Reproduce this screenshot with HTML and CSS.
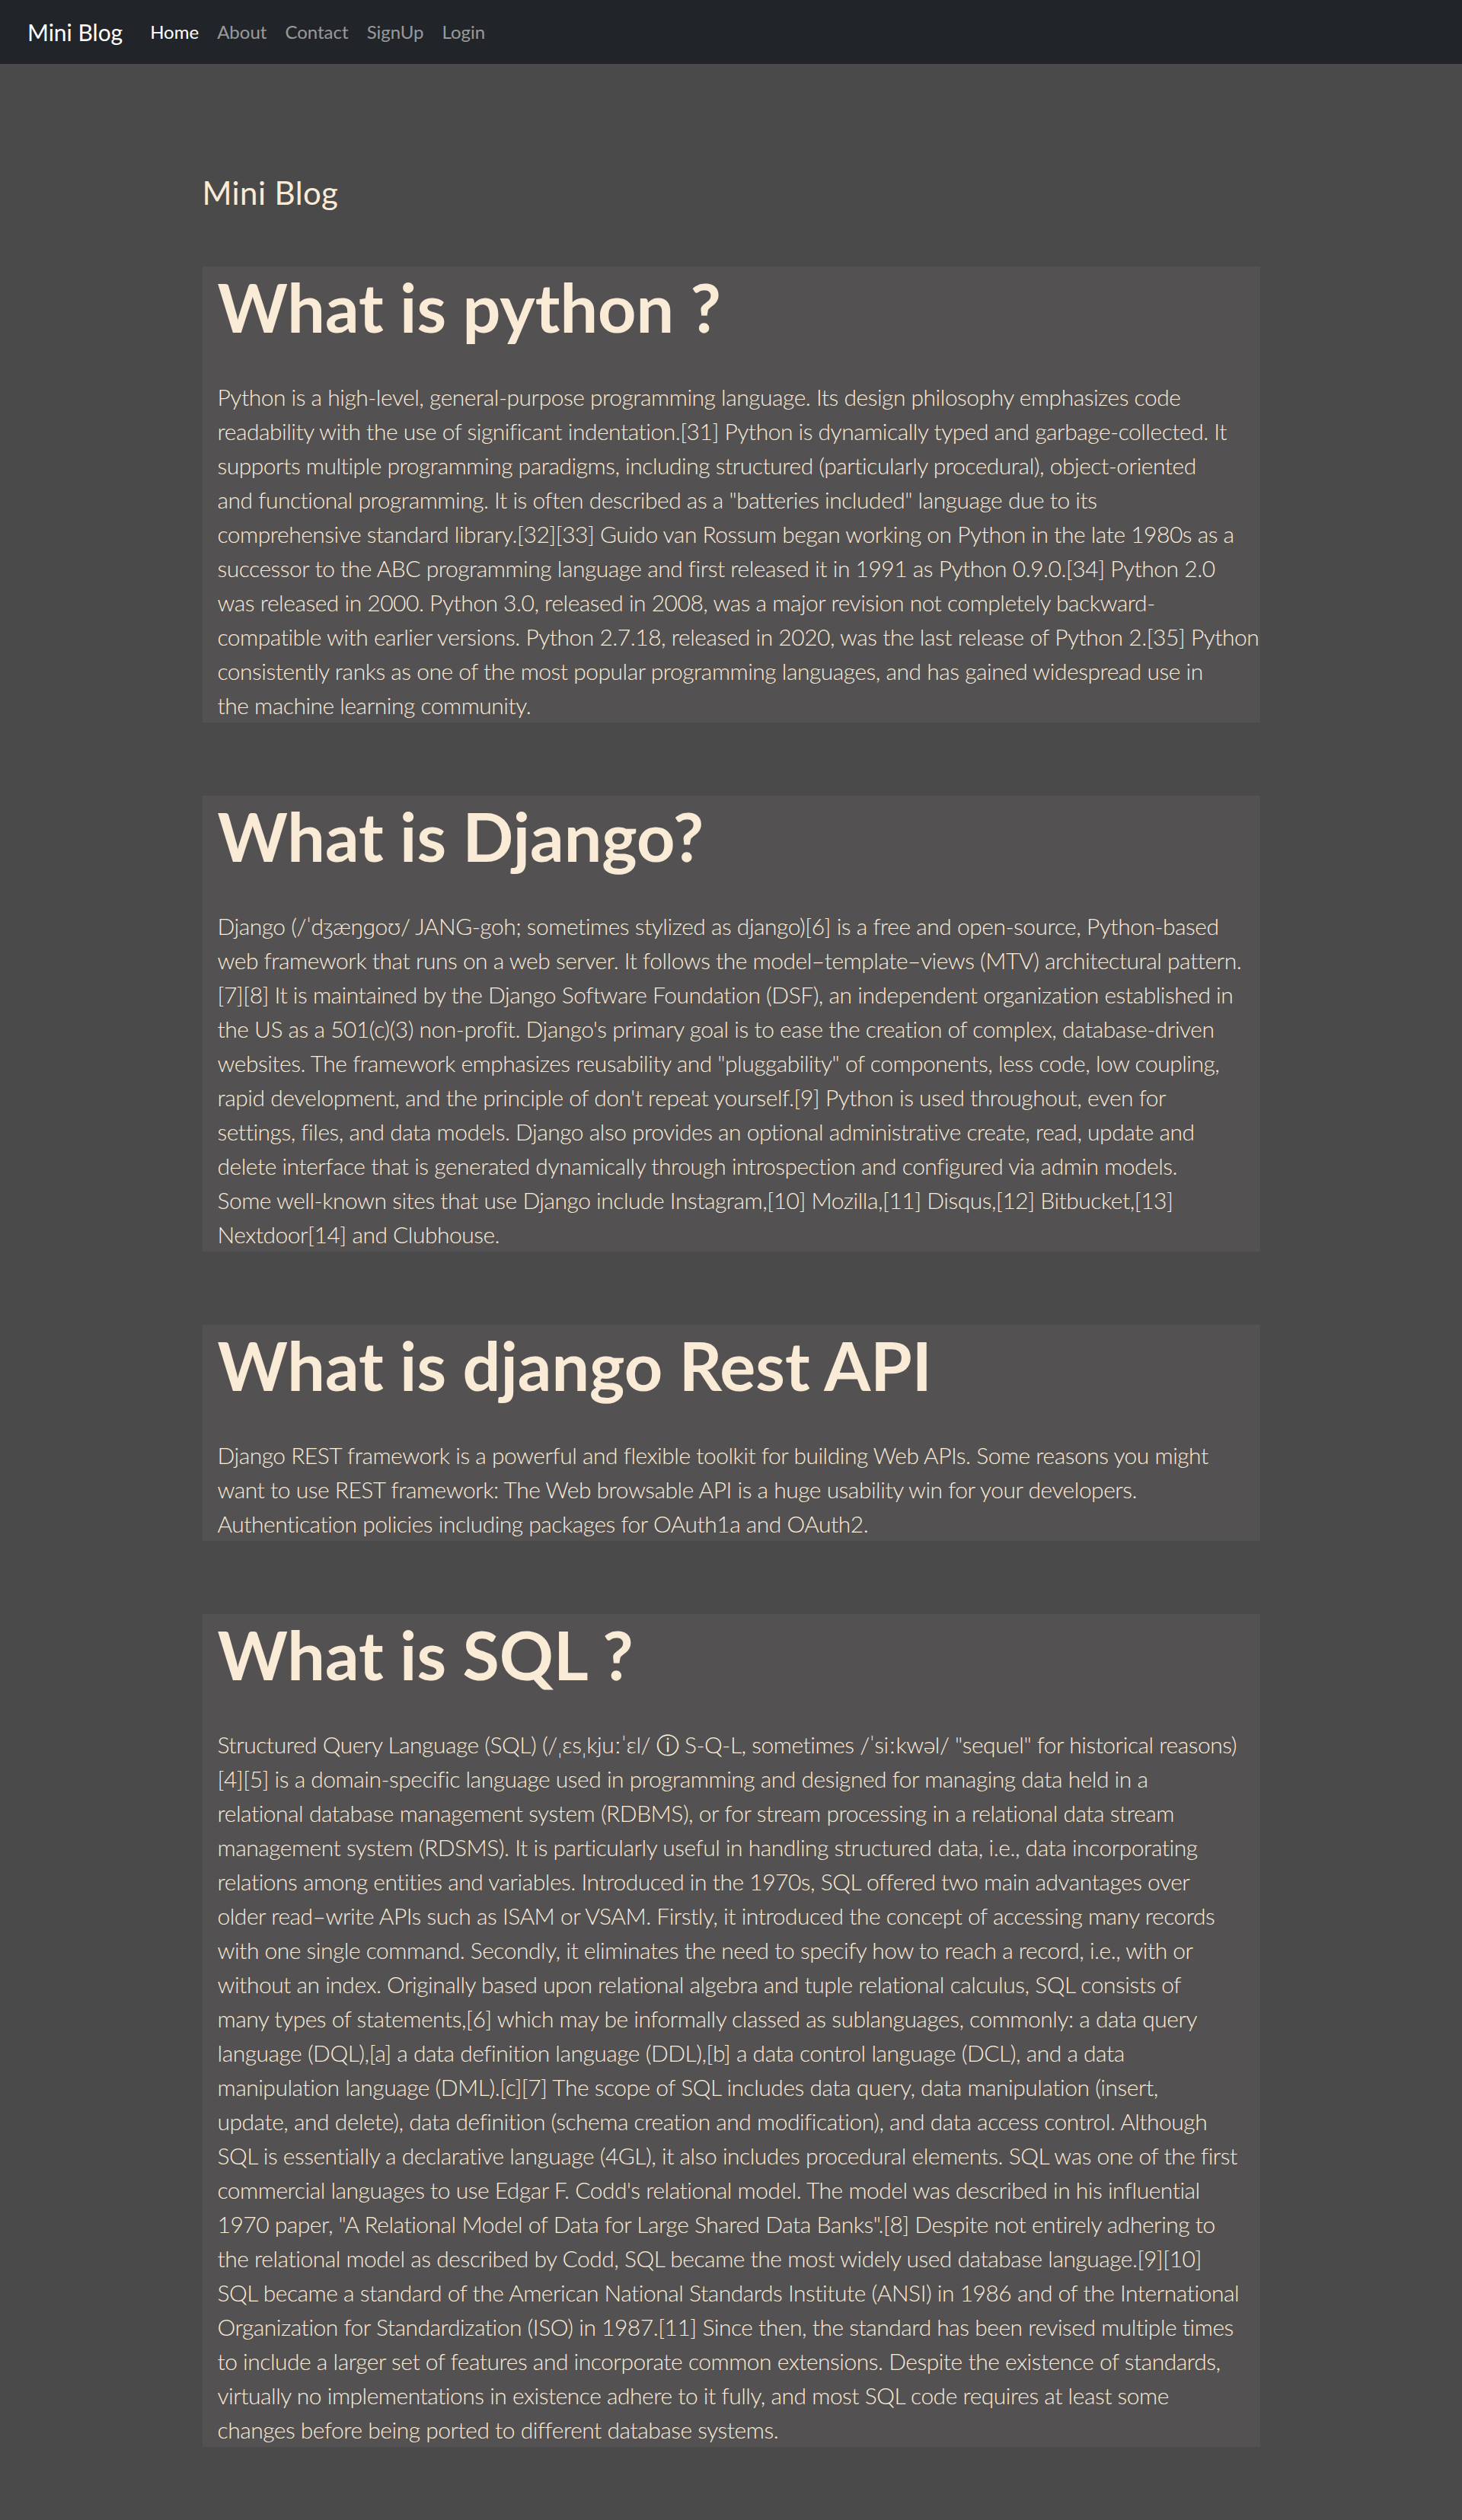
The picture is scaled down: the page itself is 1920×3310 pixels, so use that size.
FILE: index.html
```html
<!DOCTYPE html>
<html lang="en">
<head>
<meta charset="utf-8">
<title>Mini Blog</title>
<link rel="stylesheet" href="styles.css">
</head>
<body>
<nav class="navbar">
  <a class="brand" href="#">Mini Blog</a>
  <ul class="nav-links">
    <li><a class="nav-link active" href="#">Home</a></li>
    <li><a class="nav-link" href="#">About</a></li>
    <li><a class="nav-link" href="#">Contact</a></li>
    <li><a class="nav-link" href="#">SignUp</a></li>
    <li><a class="nav-link" href="#">Login</a></li>
  </ul>
</nav>
<main class="container">
  <h3 class="page-title">Mini Blog</h3>

  <article class="post">
    <h1 class="post-title">What is python ?</h1>
    <p class="post-body">Python is a high-level, general-purpose programming language. Its design philosophy emphasizes code<br>
readability with the use of significant indentation.[31] Python is dynamically typed and garbage-collected. It<br>
supports multiple programming paradigms, including structured (particularly procedural), object-oriented<br>
and functional programming. It is often described as a "batteries included" language due to its<br>
comprehensive standard library.[32][33] Guido van Rossum began working on Python in the late 1980s as a<br>
successor to the ABC programming language and first released it in 1991 as Python 0.9.0.[34] Python 2.0<br>
was released in 2000. Python 3.0, released in 2008, was a major revision not completely backward-<br>
compatible with earlier versions. Python 2.7.18, released in 2020, was the last release of Python 2.[35] Python<br>
consistently ranks as one of the most popular programming languages, and has gained widespread use in<br>
the machine learning community.</p>
  </article>

  <article class="post">
    <h1 class="post-title">What is Django?</h1>
    <p class="post-body">Django (/ˈdʒæŋɡoʊ/ JANG-goh; sometimes stylized as django)[6] is a free and open-source, Python-based<br>
web framework that runs on a web server. It follows the model–template–views (MTV) architectural pattern.<br>
[7][8] It is maintained by the Django Software Foundation (DSF), an independent organization established in<br>
the US as a 501(c)(3) non-profit. Django's primary goal is to ease the creation of complex, database-driven<br>
websites. The framework emphasizes reusability and "pluggability" of components, less code, low coupling,<br>
rapid development, and the principle of don't repeat yourself.[9] Python is used throughout, even for<br>
settings, files, and data models. Django also provides an optional administrative create, read, update and<br>
delete interface that is generated dynamically through introspection and configured via admin models.<br>
Some well-known sites that use Django include Instagram,[10] Mozilla,[11] Disqus,[12] Bitbucket,[13]<br>
Nextdoor[14] and Clubhouse.</p>
  </article>

  <article class="post">
    <h1 class="post-title">What is django Rest API</h1>
    <p class="post-body">Django REST framework is a powerful and flexible toolkit for building Web APIs. Some reasons you might<br>
want to use REST framework: The Web browsable API is a huge usability win for your developers.<br>
Authentication policies including packages for OAuth1a and OAuth2.</p>
  </article>

  <article class="post">
    <h1 class="post-title">What is SQL ?</h1>
    <p class="post-body">Structured Query Language (SQL) (/ˌɛsˌkjuːˈɛl/ ⓘ S-Q-L, sometimes /ˈsiːkwəl/ "sequel" for historical reasons)<br>
[4][5] is a domain-specific language used in programming and designed for managing data held in a<br>
relational database management system (RDBMS), or for stream processing in a relational data stream<br>
management system (RDSMS). It is particularly useful in handling structured data, i.e., data incorporating<br>
relations among entities and variables. Introduced in the 1970s, SQL offered two main advantages over<br>
older read–write APIs such as ISAM or VSAM. Firstly, it introduced the concept of accessing many records<br>
with one single command. Secondly, it eliminates the need to specify how to reach a record, i.e., with or<br>
without an index. Originally based upon relational algebra and tuple relational calculus, SQL consists of<br>
many types of statements,[6] which may be informally classed as sublanguages, commonly: a data query<br>
language (DQL),[a] a data definition language (DDL),[b] a data control language (DCL), and a data<br>
manipulation language (DML).[c][7] The scope of SQL includes data query, data manipulation (insert,<br>
update, and delete), data definition (schema creation and modification), and data access control. Although<br>
SQL is essentially a declarative language (4GL), it also includes procedural elements. SQL was one of the first<br>
commercial languages to use Edgar F. Codd's relational model. The model was described in his influential<br>
1970 paper, "A Relational Model of Data for Large Shared Data Banks".[8] Despite not entirely adhering to<br>
the relational model as described by Codd, SQL became the most widely used database language.[9][10]<br>
SQL became a standard of the American National Standards Institute (ANSI) in 1986 and of the International<br>
Organization for Standardization (ISO) in 1987.[11] Since then, the standard has been revised multiple times<br>
to include a larger set of features and incorporate common extensions. Despite the existence of standards,<br>
virtually no implementations in existence adhere to it fully, and most SQL code requires at least some<br>
changes before being ported to different database systems.</p>
  </article>
</main>
</body>
</html>
```

FILE: styles.css
```css
* {
  box-sizing: border-box;
}

body {
  margin: 0;
  background: #4a4a4a;
  color: #faebd7;
  font-family: Lato, "Open Sans", "DejaVu Sans", sans-serif;
}

.navbar {
  height: 84px;
  background: #212529;
  display: flex;
  align-items: center;
  padding: 0 36px;
}

.brand {
  font-size: 30px;
  line-height: 45px;
  color: #ffffff;
  text-decoration: none;
  margin-right: 24px;
}

.nav-links {
  display: flex;
  list-style: none;
  margin: 0;
  padding: 0;
}

.nav-link {
  display: block;
  padding: 0 12px;
  font-size: 24px;
  line-height: 36px;
  color: rgba(255, 255, 255, 0.55);
  text-decoration: none;
}

.nav-link.active {
  color: #ffffff;
}

.container {
  width: 1389px;
  margin: 0 auto;
  padding: 144px 0 96px;
}

.page-title {
  font-size: 42px;
  line-height: 50px;
  font-weight: 400;
  letter-spacing: 0.4px;
  margin: 0 0 72px;
}

.post {
  background: #535152;
  padding: 0 20px;
  margin-bottom: 96px;
}

.post:last-child {
  margin-bottom: 0;
}

.post-title {
  font-size: 88px;
  line-height: 106px;
  font-weight: 700;
  margin: 0 0 43px;
}

.post-body {
  font-size: 30px;
  line-height: 45px;
  font-weight: 300;
  letter-spacing: -0.5px;
  white-space: nowrap;
  margin: 0;
}
```
